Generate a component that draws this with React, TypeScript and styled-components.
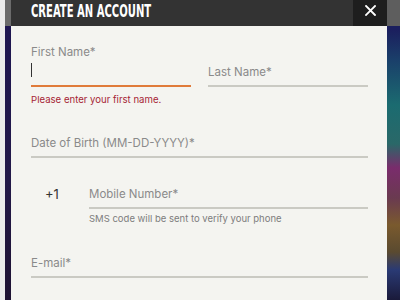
import React from 'react';
import styled, { createGlobalStyle } from 'styled-components';

const GlobalStyle = createGlobalStyle`
  html, body {
    margin: 0;
    padding: 0;
    width: 400px;
    height: 300px;
    overflow: hidden;
    background: #ececec;
  }
  * { box-sizing: border-box; }
`;

const App = () => (
  <>
    <GlobalStyle />
    <Screen>
      <LeftGutter />
      <Modal>
        <Header>
          <Title>CREATE AN ACCOUNT</Title>
          <Close aria-label="Close">
            <svg width="11" height="11" viewBox="0 0 11 11">
              <path d="M1 1 L10 10 M10 1 L1 10" stroke="#fff" strokeWidth="1.8" strokeLinecap="square" />
            </svg>
          </Close>
        </Header>
        <Body>
          <NameRow>
            <Field>
              <FloatLabel>First Name*</FloatLabel>
              <InputLine $active>
                <Cursor />
              </InputLine>
            </Field>
            <Field>
              <InputLine>
                <Placeholder>Last Name*</Placeholder>
              </InputLine>
            </Field>
          </NameRow>
          <ErrorText>Please enter your first name.</ErrorText>

          <Section $gap={25}>
            <InputLine>
              <Placeholder>Date of Birth (MM-DD-YYYY)*</Placeholder>
            </InputLine>
          </Section>

          <Section $gap={24}>
            <PhoneRow>
              <CountryCode>+1</CountryCode>
              <Field>
                <InputLine>
                  <Placeholder>Mobile Number*</Placeholder>
                </InputLine>
              </Field>
            </PhoneRow>
            <Hint>SMS code will be sent to verify your phone</Hint>
          </Section>

          <Section $gap={26}>
            <InputLine>
              <Placeholder>E-mail*</Placeholder>
            </InputLine>
          </Section>
        </Body>
      </Modal>
      <RightGutter />
    </Screen>
  </>
);

const Screen = styled.div`
  display: flex;
  width: 400px;
  height: 300px;
  overflow: hidden;
`;

const LeftGutter = styled.div`
  flex: 0 0 11px;
  border-left: 5px solid #ebebeb;
  background: linear-gradient(#6b6b6b 0 26px, transparent 26px),
    linear-gradient(#1d1552, #221848 60%, #1e1232);
`;

const RightGutter = styled.div`
  flex: 0 0 13px;
  background: linear-gradient(#5e5e5e 0 26px, transparent 26px),
    linear-gradient(
      #1b1f5e 10%,
      #1a3f6a 20%,
      #1b6b70 35%,
      #2a6868 48%,
      #7a2c6c 56%,
      #6a3a50 66%,
      #7a5a2e 75%,
      #5a4a30 84%,
      #2a3a74 90%,
      #1a1a3a 100%
    );
`;

const Modal = styled.div`
  flex: 1;
  display: flex;
  flex-direction: column;
  min-width: 0;
`;

const Header = styled.div`
  height: 26px;
  display: flex;
  align-items: flex-start;
  background: #333333;
`;

const Title = styled.h1`
  margin: 0 0 0 20px;
  font-family: 'Liberation Sans Narrow', 'DejaVu Sans Condensed', sans-serif;
  font-weight: 700;
  font-size: 18px;
  line-height: 21px;
  color: #ffffff;
  white-space: nowrap;
  transform: scaleX(0.62);
  transform-origin: left center;
`;

const Close = styled.div`
  margin-left: auto;
  width: 34px;
  height: 26px;
  display: flex;
  justify-content: center;
  padding-top: 5px;
  background: #1e1e1e;
`;

const Body = styled.div`
  flex: 1;
  padding: 18px 19px 0 20px;
  background: #f4f4f0;
  font-family: Inter, 'Noto Sans', sans-serif;
`;

const NameRow = styled.div`
  display: grid;
  grid-template-columns: 1fr 1fr;
  column-gap: 17px;
  align-items: end;
`;

const Field = styled.div`
  flex: 1;
  display: flex;
  flex-direction: column;
`;

const FloatLabel = styled.label`
  font-size: 11.5px;
  line-height: 16px;
  color: #8a8a8a;
`;

const InputLine = styled.div<{ $active?: boolean }>`
  height: 27px;
  display: flex;
  align-items: flex-end;
  padding-bottom: 5px;
  border-bottom: 2px solid ${({ $active }) => ($active ? '#e07b3a' : '#cacac3')};
`;

const Placeholder = styled.span`
  font-size: 11.5px;
  line-height: 16px;
  color: #8a8a8a;
  white-space: nowrap;
`;

const Cursor = styled.span`
  width: 1px;
  height: 14px;
  margin-bottom: 3px;
  background: #333;
`;

const ErrorText = styled.div`
  margin-top: 7px;
  font-size: 9.6px;
  line-height: 12px;
  color: #a61f35;
`;

const Section = styled.div<{ $gap: number }>`
  margin-top: ${({ $gap }) => $gap}px;
`;

const PhoneRow = styled.div`
  display: flex;
  align-items: flex-end;
`;

const CountryCode = styled.span`
  flex: 0 0 58px;
  padding: 0 0 7px 14px;
  font-size: 13px;
  line-height: 16px;
  color: #333;
`;

const Hint = styled.div`
  margin: 4px 0 0 58px;
  font-size: 9.5px;
  line-height: 12px;
  color: #7d7d7d;
`;

export default App;
